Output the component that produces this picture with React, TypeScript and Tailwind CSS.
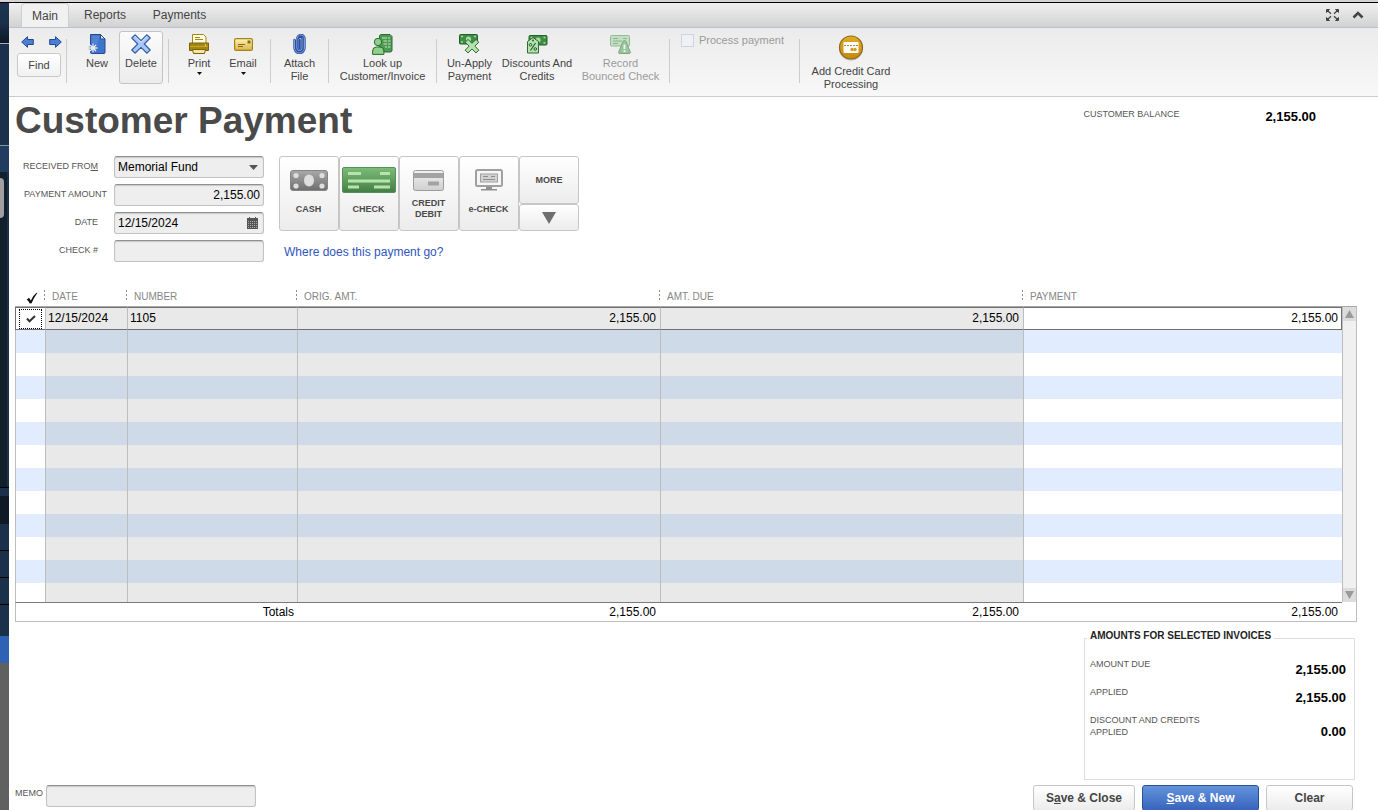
import { useState } from 'react';
import type { ReactNode } from 'react';
import clsx from 'clsx';

interface RibbonButtonProps {
  icon: ReactNode;
  lines: string[];
  className: string;
  active?: boolean;
  disabled?: boolean;
  menu?: boolean;
}

function RibbonButton({ icon, lines, className, active, disabled, menu }: RibbonButtonProps) {
  return (
    <button
      type="button"
      disabled={disabled}
      className={clsx(
        'mt-[3px] flex h-[53px] shrink-0 flex-col items-center rounded-[3px] border pt-[2px] leading-[13px] whitespace-nowrap',
        active ? 'border-[#c4c4c4] bg-gradient-to-b from-[#fbfbfb] to-[#ececec]' : 'border-transparent',
        disabled && 'text-[#9b9b9b]',
        className,
      )}
    >
      <span className="mb-[3px] flex h-5 items-center">{icon}</span>
      {lines.map((line) => (
        <span key={line}>{line}</span>
      ))}
      {menu && (
        <svg width="5" height="3" viewBox="0 0 5 3" className="mt-[2px]">
          <path d="M0 0h5L2.5 3z" fill="#111" />
        </svg>
      )}
    </button>
  );
}

function Separator() {
  return <div className="mt-[11px] h-11 w-px shrink-0 bg-[#cdcdcd]" />;
}

/* ---------- ribbon icons ---------- */

function ArrowIcon({ flip }: { flip?: boolean }) {
  return (
    <svg width="13" height="12" viewBox="0 0 13 12" className={flip ? 'rotate-180' : ''}>
      <path d="M6.5.7v2.8h5.8v5H6.5v2.8L.7 6z" fill="#4a7fd4" stroke="#24488f" strokeLinejoin="round" />
    </svg>
  );
}

function NewIcon() {
  return (
    <svg width="18" height="20" viewBox="0 0 18 20">
      <path d="M2.5.5h10L17 5v13.5q0 1-1 1H3.5q-1 0-1-1z" fill="#3f74cb" stroke="#24488f" />
      <path d="M3.5 1.5h8L8 18H3.5z" fill="#5c8ddb" opacity=".6" />
      <path d="M12.5.5V5H17z" fill="#dbe8fb" stroke="#24488f" strokeLinejoin="round" />
      <path d="M5 9.5v9M.8 14h8.4" stroke="#24488f" strokeWidth="3" opacity=".5" />
      <path d="M5 9.5v9M.5 14h9M2 11l6 6M8 11l-6 6" stroke="#e3eefd" strokeWidth="1.3" />
    </svg>
  );
}

function DeleteIcon() {
  return (
    <svg width="20" height="20" viewBox="0 0 20 20">
      <path
        d="M4 .8 10 6.6 16 .8 19.2 4 13.3 10l5.9 6-3.2 3.2-6-5.8-6 5.8L.8 16l5.9-6L.8 4z"
        fill="#a9c8f6"
        stroke="#3560a8"
        strokeWidth="1.2"
        strokeLinejoin="round"
      />
      <path d="M4 2.4 10 8.2 16 2.4" fill="none" stroke="#d9e8fd" />
    </svg>
  );
}

function PrintIcon() {
  return (
    <svg width="20" height="20" viewBox="0 0 20 20">
      <path d="M3.5.5h11L17 3v8H3.5z" fill="#fffbe8" stroke="#a5850d" />
      <path d="M6 3.5h5M6 5.500h8" stroke="#a5850d" />
      <path d="M.5 9h19v7.500H.5z" fill="#a5850d" stroke="#7c6204" strokeLinejoin="round" />
      <path d="M1 12.500h18" stroke="#c6a534" />
      <path d="M3.5 15.5h13l-1 4h-11z" fill="#f4e5a6" stroke="#7c6204" />
      <circle cx="16.5" cy="11" r=".8" fill="#f4e5a6" />
    </svg>
  );
}

function EmailIcon() {
  return (
    <svg width="19" height="13" viewBox="0 0 19 13">
      <defs>
        <linearGradient id="mail" x1="0" y1="0" x2="0" y2="1">
          <stop offset="0" stopColor="#fff3bd" />
          <stop offset="1" stopColor="#d9b44a" />
        </linearGradient>
      </defs>
      <rect x=".6" y=".6" width="17.8" height="11.8" rx="1.5" fill="url(#mail)" stroke="#a5850d" strokeWidth="1.2" />
      <rect x="13.5" y="2.5" width="3" height="3" fill="#8a6d08" />
      <path d="M4 6.5h7M4 8.5h5" stroke="#8a6d08" />
    </svg>
  );
}

function ClipIcon() {
  return (
    <svg width="13" height="20" viewBox="0 0 13 20" fill="none">
      <path
        d="M3.8 6.5V14a2.6 2.6 0 0 0 5.2 0V4.500a2 2 0 0 0-3.600-.8M1.500 6v8a5 5 0 0 0 10 0V4.800a3.600 3.600 0 0 0-7.200-.5M6.400 6v8"
        stroke="#2b4f9e"
        strokeWidth="2.4"
        strokeLinecap="round"
      />
      <path
        d="M3.8 6.5V14a2.6 2.6 0 0 0 5.2 0V4.500M1.500 6v8a5 5 0 0 0 10 0V4.800a3.600 3.600 0 0 0-7.200-.5"
        stroke="#85a9e6"
        strokeWidth=".9"
        strokeLinecap="round"
      />
    </svg>
  );
}

function LookupIcon() {
  return (
    <svg width="21" height="21" viewBox="0 0 21 21">
      <path d="M7.5 1.500 9 .5h9l2 2V17l-1.500 1h-11z" fill="#4f9a52" stroke="#2a6b30" />
      <path d="M10 4h8M11.500 7h7M11.500 10h7M13 13h5.500" stroke="#c2e6bf" strokeWidth="1.200" />
      <path d="M15.500 3v12" stroke="#4f9a52" />
      <circle cx="6" cy="8" r="3.700" fill="#8fcf8c" stroke="#2a6b30" />
      <path d="M.6 20.400V17q0-4 4-4h3.300q4 0 4 4v3.400z" fill="#8fcf8c" stroke="#2a6b30" />
    </svg>
  );
}

function Bill() {
  return (
    <>
      <rect x=".5" y=".5" width="18" height="9.500" rx="1" fill="#3f8c45" stroke="#24602b" />
      <circle cx="9.500" cy="5" r="2.600" fill="#a7dba4" />
      <path d="M2 2.500h2M2 8h2M15 2.500h2M15 8h2" stroke="#a7dba4" strokeWidth="1.500" />
    </>
  );
}

function UnapplyIcon() {
  return (
    <svg width="21" height="20" viewBox="0 0 21 20">
      <Bill />
      <path
        d="m9 5.500 4 3.800 4-3.800 2.800 2.600-3.900 4 3.900 4.100-2.800 2.700-4-3.900-4 3.900-2.800-2.700 3.900-4.100-3.900-4z"
        fill="#b5e2b0"
        stroke="#2a6b30"
        strokeLinejoin="round"
      />
    </svg>
  );
}

function DiscountIcon() {
  return (
    <svg width="21" height="20" viewBox="0 0 21 20">
      <g transform="translate(1.500 1)">
        <Bill />
      </g>
      <path d="m6 3.500 5.500 4v11.500H.5V7.500z" fill="#b5e2b0" stroke="#2a6b30" strokeLinejoin="round" />
      <path d="m3.500 16.500 5-7.500" stroke="#24602b" strokeWidth="1.200" />
      <circle cx="3.500" cy="10.800" r="1.300" fill="none" stroke="#24602b" />
      <circle cx="8.300" cy="15" r="1.300" fill="none" stroke="#24602b" />
      <circle cx="6" cy="6.500" r=".9" fill="#24602b" />
    </svg>
  );
}

function BouncedIcon() {
  return (
    <svg width="21" height="19" viewBox="0 0 21 19">
      <rect x=".5" y=".5" width="19" height="10.500" rx="1" fill="#c3dfc3" stroke="#94ba96" />
      <path d="M3 3.500h5M13 3.500h4M3 6h9M3 8.500h5" stroke="#8fb591" />
      <path d="M14.500 5.500q1 0 1.300.8l4.500 10.700q.4 1.500-1.300 1.500h-9q-1.700 0-1.300-1.500l4.500-10.700q.3-.8 1.300-.8z" fill="#9cc49e" stroke="#7ba67e" />
      <path d="M14.500 9.500V14M14.500 15.300V17" stroke="#eef7ee" strokeWidth="1.800" />
    </svg>
  );
}

function CreditCardBadge() {
  return (
    <svg width="26" height="26" viewBox="0 0 26 26">
      <defs>
        <linearGradient id="gold" x1="0" y1="0" x2="0" y2="1">
          <stop offset="0" stopColor="#e0ac28" />
          <stop offset="1" stopColor="#c28a10" />
        </linearGradient>
      </defs>
      <circle cx="13" cy="13.5" r="12" fill="#bcbcbc" />
      <circle cx="13" cy="12.5" r="11.5" fill="url(#gold)" stroke="#8f6a1c" strokeWidth="1.2" />
      <rect x="5.5" y="7" width="15" height="11" rx="1" fill="#fff" />
      <path d="M6 10.500h14" stroke="#c28a10" strokeDasharray="2 1" />
      <circle cx="14" cy="14.500" r="1.700" fill="#d29b1c" />
      <circle cx="17" cy="14.500" r="1.700" fill="#d29b1c" />
    </svg>
  );
}

/* ---------- payment method icons ---------- */

function CashIcon() {
  return (
    <svg width="38" height="21" viewBox="0 0 38 21">
      <defs>
        <linearGradient id="cash" x1="0" y1="0" x2="0" y2="1">
          <stop offset="0" stopColor="#a9a9a9" />
          <stop offset="1" stopColor="#6e6e6e" />
        </linearGradient>
      </defs>
      <rect x=".5" y=".5" width="37" height="20" rx="2.5" fill="url(#cash)" stroke="#858585" />
      <ellipse cx="19" cy="10.5" rx="5" ry="6" fill="#dedede" />
      <g fill="#dedede">
        <circle cx="6" cy="5.5" r="2.6" />
        <circle cx="6" cy="16" r="2.6" />
        <circle cx="32" cy="5.5" r="2.6" />
        <circle cx="32" cy="16" r="2.6" />
      </g>
    </svg>
  );
}

function CheckIcon() {
  return (
    <svg width="54" height="26" viewBox="0 0 54 26">
      <defs>
        <linearGradient id="check" x1="0" y1="0" x2="0" y2="1">
          <stop offset="0" stopColor="#7cbd78" />
          <stop offset="1" stopColor="#437e43" />
        </linearGradient>
      </defs>
      <rect x=".5" y=".5" width="53" height="25" rx="1.5" fill="url(#check)" stroke="#55915a" />
      <path d="M6 6.5h13M38 6.5h10M6 14h42M6 20h11M32 20h16" stroke="#b9e3ae" strokeWidth="3" />
    </svg>
  );
}

function CardIcon() {
  return (
    <svg width="31" height="21" viewBox="0 0 31 21">
      <defs>
        <linearGradient id="card" x1="0" y1="0" x2="0" y2="1">
          <stop offset="0" stopColor="#f2f2f2" />
          <stop offset="1" stopColor="#cfcfcf" />
        </linearGradient>
      </defs>
      <rect x=".5" y=".5" width="30" height="20" rx="2" fill="url(#card)" stroke="#9c9c9c" />
      <path d="M1 5.5h29" stroke="#a3a3a3" strokeWidth="5" />
      <path d="M15 13.5h11" stroke="#a3a3a3" strokeWidth="4" />
    </svg>
  );
}

function MonitorIcon() {
  return (
    <svg width="28" height="22" viewBox="0 0 28 22">
      <rect x="1" y="1" width="26" height="16" rx="1.5" fill="#f6f6f6" stroke="#a0a0a0" strokeWidth="2" />
      <rect x="5.5" y="5" width="17" height="8" fill="#d2d2d2" stroke="#a0a0a0" />
      <path d="M8 7.5h5M16 7.5h4M8 10.5h12" stroke="#8c8c8c" />
      <path d="M11 18h6v2h5v1.5H6V20h5z" fill="#909090" />
    </svg>
  );
}

function TickIcon({ className }: { className?: string }) {
  return (
    <svg viewBox="0 0 12 12" className={className}>
      <path d="M.8 7.5 3 5.8l1.800 2.600Q7 3.500 10.500.8l.8.2Q8 5.500 5.600 11.300l-1.800.2Q2.600 9 .8 7.500z" fill="#111" />
    </svg>
  );
}

const field =
  'h-[22px] w-full rounded-[3px] border border-[#c2c2c2] border-t-[#8f8f8f] bg-[#eee] px-[3px] text-xs text-black shadow-[inset_0_1px_1px_#c8c8c8] outline-none';
const caption = 'text-[9px] leading-3 text-[#555] uppercase whitespace-nowrap';
const payButton =
  'flex flex-col items-center rounded-[3px] border border-[#c6c6c6] bg-gradient-to-b from-white to-[#ececec] text-[9px] font-bold leading-[11px] text-[#4a4a4a]';

const stripes = Array.from({ length: 12 }, (_, i) => i);

const headings = ['Date', 'Number', 'Orig. Amt.', 'Amt. Due', 'Payment'];

const methods = [
  { id: 'cash', icon: <CashIcon />, lines: ['CASH'] },
  { id: 'check', icon: <CheckIcon />, lines: ['CHECK'] },
  { id: 'card', icon: <CardIcon />, lines: ['CREDIT', 'DEBIT'] },
  { id: 'echeck', icon: <MonitorIcon />, lines: ['e-CHECK'] },
];

const amounts = [
  { label: ['Amount Due'], value: '2,155.00' },
  { label: ['Applied'], value: '2,155.00' },
  { label: ['Discount and Credits', 'Applied'], value: '0.00' },
];

function SideStrip() {
  return (
    <aside className="flex w-[9px] shrink-0 flex-col bg-[#606060]">
      <div className="h-10 bg-gradient-to-b from-[#1d3550] via-[#1b304a] to-[#0c1826]" />
      <div className="h-px bg-[#a5adb5]" />
      <div className="h-[101px] bg-[#1b304a]" />
      <div className="h-px bg-[#8592a0]" />
      <div className="h-[26px] bg-[#213c61]" />
      <div className="h-[315px] border-r-2 border-[#1b304a] bg-[#12202e] pt-[6px]">
        <div className="h-10 w-1 rounded-r-sm bg-[#a0a0a0]" />
      </div>
      <div className="h-[9px] border-t border-black bg-[#1b304a]" />
      <div className="h-7 bg-[#0f1a26]" />
      <div className="h-[27px] border-b border-black bg-[#1b304a]" />
      <div className="h-[27px] border-b border-black bg-[#1b304a]" />
      <div className="h-[27px] border-b border-black bg-[#1b304a]" />
      <div className="h-[31px] bg-[#1b304a]" />
      <div className="h-[27px] bg-[#2e63b4]" />
    </aside>
  );
}

function TabBar() {
  return (
    <div className="flex h-[25px] items-end border-b border-[#b7c3d0] bg-gradient-to-b from-[#f0f0f0] to-[#d2d2d2]">
      <button type="button" className="ml-3 h-6 w-12 rounded-t-[4px] border border-b-0 border-[#cfcfcf] bg-[#f1f1f1]">
        Main
      </button>
      <button type="button" className="h-6 w-[72px]">
        Reports
      </button>
      <button type="button" className="h-6 w-[77px]">
        Payments
      </button>
      <div className="mr-[14px] ml-auto flex h-6 items-center gap-[13px]">
        <button type="button" aria-label="Expand">
          <svg width="13" height="12" viewBox="0 0 13 12" fill="#444" stroke="#444">
            <path d="M.5.5h3l-3 3zM12.5.5v3l-3-3zM.5 11.5v-3l3 3zM12.5 11.5h-3l3-3z" />
            <path d="m2 2 3 2.8M11 2 8 4.8M2 10l3-2.8M11 10 8 7.2" strokeWidth="1.3" />
          </svg>
        </button>
        <button type="button" aria-label="Collapse ribbon">
          <svg width="12" height="8" viewBox="0 0 12 8" fill="none">
            <path d="m1.5 6.5 4.5-4.5 4.5 4.5" stroke="#444" strokeWidth="2.6" />
          </svg>
        </button>
      </div>
    </div>
  );
}

function Ribbon() {
  return (
    <div className="flex h-[69px] items-start border-b border-[#cbcbcb] bg-gradient-to-b from-[#ebebeb] to-[#f8f8f8] text-[11px]">
      <div className="w-[57px] shrink-0 pt-2 pl-2">
        <div className="flex h-[17px] justify-between px-1">
          <button type="button" aria-label="Previous" className="h-3">
            <ArrowIcon />
          </button>
          <button type="button" aria-label="Next" className="h-3">
            <ArrowIcon flip />
          </button>
        </div>
        <button type="button" className="h-6 w-11 rounded-[3px] border border-[#c8c8c8] bg-gradient-to-b from-white to-[#f1f1f1]">
          Find
        </button>
      </div>
      <Separator />
      <div className="flex w-[101px] shrink-0 pl-2">
        <RibbonButton className="w-11" icon={<NewIcon />} lines={['New']} />
        <RibbonButton className="w-11" icon={<DeleteIcon />} lines={['Delete']} active />
      </div>
      <Separator />
      <div className="flex w-[101px] shrink-0 pl-2">
        <RibbonButton className="w-11" icon={<PrintIcon />} lines={['Print']} menu />
        <RibbonButton className="w-11" icon={<EmailIcon />} lines={['Email']} menu />
      </div>
      <Separator />
      <RibbonButton className="w-[57px]" icon={<ClipIcon />} lines={['Attach', 'File']} />
      <Separator />
      <RibbonButton className="w-[107px]" icon={<LookupIcon />} lines={['Look up', 'Customer/Invoice']} />
      <Separator />
      <RibbonButton className="w-[65px]" icon={<UnapplyIcon />} lines={['Un-Apply', 'Payment']} />
      <RibbonButton className="w-[70px]" icon={<DiscountIcon />} lines={['Discounts And', 'Credits']} />
      <RibbonButton className="w-[97px]" icon={<BouncedIcon />} lines={['Record', 'Bounced Check']} disabled />
      <Separator />
      <label className="flex w-[129px] shrink-0 items-center gap-[5px] pt-[6px] pl-[11px] leading-[13px] text-[#9b9b9b]">
        <input type="checkbox" disabled className="size-[13px] appearance-none border border-[#cdd3e2] bg-[#f0f1f5]" />
        Process payment
      </label>
      <Separator />
      <button type="button" className="flex w-[102px] shrink-0 flex-col items-center pt-[7px] leading-[13px]">
        <CreditCardBadge />
        <span className="mt-1">Add Credit Card</span>
        <span>Processing</span>
      </button>
    </div>
  );
}

function PaymentForm() {
  const [amount, setAmount] = useState('2,155.00');
  const [date, setDate] = useState('12/15/2024');
  const [method, setMethod] = useState('check');

  return (
    <div className="flex pl-[6px]">
      <div className="grid w-[249px] shrink-0 grid-cols-[92px_150px] content-start gap-x-[7px] gap-y-[6px] text-right">
        <label htmlFor="from" className={clsx(caption, 'mr-[9px] pt-1')}>
          Received Fro<u>m</u>
        </label>
        <div className="relative">
          <select id="from" className={clsx(field, 'appearance-none')}>
            <option>Memorial Fund</option>
          </select>
          <svg width="9" height="5" viewBox="0 0 9 5" className="pointer-events-none absolute top-[9px] right-[6px]">
            <path d="M0 0h9L4.5 5z" fill="#555" />
          </svg>
        </div>
        <label htmlFor="amount" className={clsx(caption, 'pt-1')}>
          Payment Amount
        </label>
        <input id="amount" value={amount} onChange={(e) => setAmount(e.target.value)} className={clsx(field, 'text-right')} />
        <label htmlFor="date" className={clsx(caption, 'mr-[9px] pt-1')}>
          Date
        </label>
        <div className="relative">
          <input id="date" value={date} onChange={(e) => setDate(e.target.value)} className={field} />
          <button type="button" aria-label="Pick a date" className="absolute top-[5px] right-[6px]">
            <svg width="11" height="12" viewBox="0 0 11 12" className="block">
              <path d="M0 1h2V0h1v1h5V0h1v1h2v11H0z" fill="#555" />
              <path d="M1 4.5h9M1 6.5h9M1 8.5h9M1 10.5h9" stroke="#aaa" strokeDasharray="1 1" />
            </svg>
          </button>
        </div>
        <label htmlFor="check-no" className={clsx(caption, 'mr-[9px] pt-1')}>
          Check #
        </label>
        <input id="check-no" className={field} />
      </div>

      <div className="ml-[15px]">
        <div className="flex h-[75px]">
          {methods.map((m) => (
            <button
              key={m.id}
              type="button"
              aria-pressed={method === m.id}
              onClick={() => setMethod(m.id)}
              className={clsx(payButton, 'w-[60px] pr-px')}
            >
              <span className="mt-[9px] flex h-7 items-center">{m.icon}</span>
              <span className="flex h-[30px] flex-col justify-center">
                {m.lines.map((line) => (
                  <span key={line}>{line}</span>
                ))}
              </span>
            </button>
          ))}
          <div className="flex w-[60px] flex-col">
            <button type="button" className={clsx(payButton, 'h-12 justify-center')}>
              MORE
            </button>
            <button type="button" aria-label="More payment methods" className={clsx(payButton, 'h-[27px] justify-center')}>
              <svg width="14" height="12" viewBox="0 0 14 12">
                <path d="M0 0h14L7 12z" fill="#6f6f6f" />
              </svg>
            </button>
          </div>
        </div>
        <a href="#where" className="mt-[13px] ml-[5px] block leading-4 text-[#2f55c0]">
          Where does this payment go?
        </a>
      </div>
    </div>
  );
}

/* dotted grip at the right edge of a column heading */
function Grip() {
  return <span className="h-[11px] w-px shrink-0 bg-[repeating-linear-gradient(#8c8c8c_0_2px,transparent_2px_4px)]" />;
}

function InvoiceTable() {
  const [applied, setApplied] = useState(true);

  const cell = 'border-l border-l-[#bdbdbd] p-0';
  const current = 'border-y border-y-[#6d7172] border-l border-l-[#bdbdbd] bg-[#e9e9e9] p-0 pb-[2px]';
  const total = 'border-y border-[#bdbdbd] border-t-[#7a7a7a] p-0';

  return (
    <table className="w-full table-fixed border-separate border-spacing-0 leading-4 text-black">
      <colgroup>
        <col className="w-[30px]" />
        <col className="w-[82px]" />
        <col className="w-[170px]" />
        <col className="w-[363px]" />
        <col className="w-[363px]" />
        <col />
        <col className="w-[15px]" />
      </colgroup>
      <thead>
        <tr className="h-[17px] text-left align-top text-[10px] text-[#868686] uppercase">
          <th className="border-b border-[#a9a9a9] p-0">
            <div className="flex justify-end gap-[6px]">
              <TickIcon className="mt-[2px] size-3 shrink-0" />
              <Grip />
            </div>
          </th>
          {headings.map((h, i) => (
            <th key={h} className="border-b border-[#a9a9a9] p-0 font-normal">
              <div className="flex justify-between pl-[7px] leading-[13px]">
                {h}
                {i < 4 && <Grip />}
              </div>
            </th>
          ))}
          <td className="border-b border-[#a9a9a9] p-0" />
        </tr>
      </thead>
      <tbody>
        <tr className="h-[23px]">
          <td className="border-y border-l border-[#6d7172] p-0">
            <label className="relative mx-[3px] flex h-5 items-center justify-center border border-dotted border-black">
              <input
                type="checkbox"
                aria-label="Apply payment"
                checked={applied}
                onChange={() => setApplied(!applied)}
                className="absolute inset-0 appearance-none"
              />
              {applied && (
                <svg width="10" height="8" viewBox="0 0 10 8">
                  <path d="m1 3.5 2.5 2.8L9 1" fill="none" stroke="#333" strokeWidth="2" />
                </svg>
              )}
            </label>
          </td>
          <td className={clsx(current, 'pl-[2px]')}>12/15/2024</td>
          <td className={clsx(current, 'pl-[2px]')}>1105</td>
          <td className={clsx(current, 'pr-1 text-right')}>2,155.00</td>
          <td className={clsx(current, 'pr-1 text-right')}>2,155.00</td>
          <td className="border border-[#6d7172] border-l-[#bdbdbd] p-0 pr-[3px] pb-[2px] text-right">2,155.00</td>
          <td rowSpan={13} className="border-r border-l border-[#bdbdbd] bg-[#f0f0f0] p-0">
            <div className="flex h-[295px] flex-col justify-between">
              <button type="button" aria-label="Scroll up" className="flex h-[14px] items-center justify-center bg-[#dcdcdc]">
                <svg width="9" height="8" viewBox="0 0 9 8">
                  <path d="M0 8h9L4.5 0z" fill="#9a9a9a" />
                </svg>
              </button>
              <button type="button" aria-label="Scroll down" className="flex h-[14px] items-center justify-center bg-[#dcdcdc]">
                <svg width="9" height="8" viewBox="0 0 9 8">
                  <path d="M0 0h9L4.5 8z" fill="#9a9a9a" />
                </svg>
              </button>
            </div>
          </td>
        </tr>
        {stripes.map((i) => {
          const tint = i % 2 === 0 ? 'bg-[#cfdae8]' : 'bg-[#e9e9e9]';
          const edge = i % 2 === 0 ? 'bg-[#e1edff]' : 'bg-white';
          return (
            <tr key={i} className={i === 11 ? 'h-[19px]' : 'h-[23px]'}>
              <td className={clsx(cell, edge)} />
              <td className={clsx(cell, tint)} />
              <td className={clsx(cell, tint)} />
              <td className={clsx(cell, tint)} />
              <td className={clsx(cell, tint)} />
              <td className={clsx(cell, edge)} />
            </tr>
          );
        })}
      </tbody>
      <tfoot>
        <tr className="h-5 text-right">
          <td colSpan={3} className={clsx(total, 'border-l pr-[3px]')}>
            Totals
          </td>
          <td className={clsx(total, 'pr-1')}>2,155.00</td>
          <td className={clsx(total, 'pr-1')}>2,155.00</td>
          <td className={clsx(total, 'pr-1')}>2,155.00</td>
          <td className="border-r border-b border-[#bdbdbd] p-0" />
        </tr>
      </tfoot>
    </table>
  );
}

function AmountsBox() {
  return (
    <fieldset className="mr-[2px] ml-auto h-[150px] w-[271px] border border-[#dedede] px-[5px]">
      <legend className="-ml-[3px] px-[3px] pb-1 text-[10px] leading-3 font-bold text-[#222] uppercase">
        Amounts for Selected Invoices
      </legend>
      <dl className="flex flex-col gap-[10px] pt-3 pr-[3px]">
        {amounts.map(({ label, value }) => (
          <div key={label[0]} className="flex min-h-[18px] justify-between">
            <dt className={caption}>
              {label.map((line) => (
                <span key={line} className="block">
                  {line}
                </span>
              ))}
            </dt>
            <dd className="self-end text-[13px] leading-3 font-bold text-black">{value}</dd>
          </div>
        ))}
      </dl>
    </fieldset>
  );
}

export default function App() {
  const [memo, setMemo] = useState('');

  return (
    <div className="flex h-screen flex-col overflow-hidden bg-white font-['Liberation_Sans',Arial,sans-serif] text-xs text-[#444]">
      <div className="h-[3px] shrink-0 border-b border-black bg-[#d4d4d4]" />
      <div className="flex min-h-0 flex-1">
        <SideStrip />
        <div className="min-w-0 flex-1">
          <TabBar />
          <Ribbon />
          <main className="pr-[21px]">
            <div className="flex h-[59px] items-start pl-[6px]">
              <h1 className="pt-[3px] text-[37px] leading-[42px] font-bold text-[#4a4a4a]">Customer Payment</h1>
              <div className="mr-[41px] ml-auto flex gap-[86px]">
                <span className={clsx(caption, 'pt-[11px]')}>Customer Balance</span>
                <span className="pt-[13px] text-[13px] leading-[14px] font-bold text-black">2,155.00</span>
              </div>
            </div>
            <PaymentForm />
            <div className="mt-[28px] pl-[6px]">
              <InvoiceTable />
            </div>
            <div className="mt-2">
              <AmountsBox />
            </div>
            <div className="mt-[5px] flex pr-[4px] pl-[6px]">
              <label htmlFor="memo" className={clsx(caption, 'w-[31px] shrink-0 pt-[2px]')}>
                Memo
              </label>
              <input id="memo" value={memo} onChange={(e) => setMemo(e.target.value)} className={clsx(field, 'max-w-[210px]')} />
              <div className="ml-auto flex gap-[7px] font-bold">
                <button type="button" className="h-[26px] w-[102px] rounded-[3px] border border-[#c6c6c6] bg-gradient-to-b from-white to-[#ececec]">
                  S<u>a</u>ve &amp; Close
                </button>
                <button type="button" className="h-[26px] w-[117px] rounded-[3px] border border-[#2b4f96] bg-gradient-to-b from-[#6394dc] to-[#3a63bd] text-white">
                  <u>S</u>ave &amp; New
                </button>
                <button type="button" className="h-[26px] w-[87px] rounded-[3px] border border-[#c6c6c6] bg-gradient-to-b from-white to-[#ececec]">
                  Clear
                </button>
              </div>
            </div>
          </main>
        </div>
      </div>
    </div>
  );
}
